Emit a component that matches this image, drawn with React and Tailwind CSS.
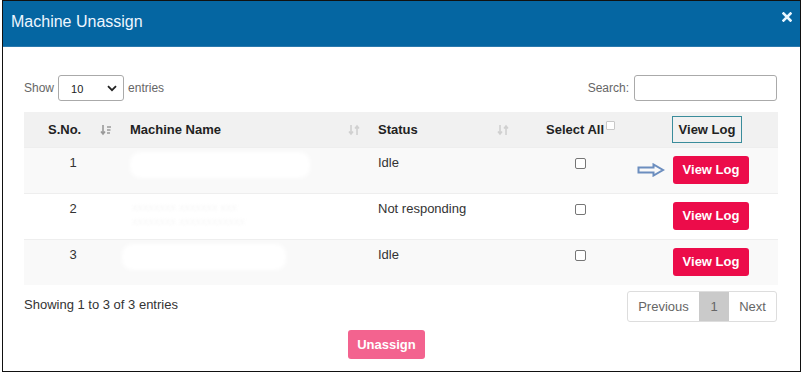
import React from "react";

const font = { fontFamily: '"Liberation Sans", Arial, sans-serif' };

const SortIcon = ({ active }) => (
  <svg width="12" height="12" viewBox="0 0 12 12" className="shrink-0">
    <g stroke={active ? "#9a9a9a" : "#d0d0d0"} strokeWidth="1.6" fill="none">
      <path d="M3 1v9M1 7.5l2 2.5 2-2.5" />
      {active ? (
        <path d="M7 3h4M7 6h3.5M7 9h3" />
      ) : (
        <path d="M9 11V2M7 4.5l2-2.5 2 2.5" />
      )}
    </g>
  </svg>
);

const Check = () => (
  <span className="inline-block w-[11px] h-[11px] border border-[#767676] rounded-[2px] bg-white" />
);

const Arrow = () => (
  <svg width="28" height="14" viewBox="0 0 28 14">
    <path
      d="M1.5 4.5h15V1.5l9.5 5.5-9.5 5.5V9.5h-15z"
      fill="none"
      stroke="#6c8ebf"
      strokeWidth="2"
      strokeLinejoin="miter"
    />
  </svg>
);

const rows = [
  { n: 1, status: "Idle", arrow: true, bg: "bg-[#f9f9f9]", blob: "w-[180px] ml-[4px]" },
  { n: 2, status: "Not responding", bg: "bg-white", faint: true },
  { n: 3, status: "Idle", bg: "bg-[#f9f9f9]", blob: "w-[164px] ml-[-4px]" },
];

export default function App() {
  return (
    <div className="w-[802px] h-[373px] bg-white text-[#333]" style={font}>
      <div className="ml-[2px] w-[799px] h-[372px] border border-[#111] flex flex-col">
        {/* header */}
        <div className="h-[46px] bg-[#0566a2] border-b border-[#2b79ad] flex items-center justify-between pl-[8px] pr-[8px]">
          <span className="text-[16px] text-[#eef6ff] -mt-[4px]">Machine Unassign</span>
          <svg width="10" height="10" viewBox="0 0 10 10" className="-mt-[14px]">
            <path d="M1.5 1.5l7 7M8.5 1.5l-7 7" stroke="#e8f6ff" strokeWidth="2.6" strokeLinecap="square" />
          </svg>
        </div>

        <div className="px-[21px] pt-[28px] flex flex-col">
          {/* controls */}
          <div className="flex items-center justify-between h-[26px] text-[12px] text-[#666]">
            <div className="flex items-center gap-[4px]">
              <span>Show</span>
              <div className="w-[66px] h-[26px] border border-[#aaa] rounded-[3px] flex items-center justify-between pl-[12px] pr-[6px] text-[11px] text-[#222]">
                <span className="mt-[3px]">10</span>
                <svg width="10" height="7" viewBox="0 0 10 7">
                  <path d="M1 1.2l4 4 4-4" stroke="#222" strokeWidth="1.8" fill="none" />
                </svg>
              </div>
              <span>entries</span>
            </div>
            <div className="flex items-center gap-[5px] mr-[2px]">
              <span>Search:</span>
              <div className="w-[143px] h-[26px] border border-[#aaa] rounded-[3px] bg-white" />
            </div>
          </div>

          {/* table */}
          <div className="mt-[11px] w-[754px] text-[13px]">
            <div className="grid grid-cols-[94px_248px_150px_129px_133px] h-[35px] bg-[#f1f1f1] font-bold text-[#222] items-center">
              <div className="flex items-center justify-between pl-[24px] pr-[6px]">
                <span>S.No.</span>
                <SortIcon active />
              </div>
              <div className="flex items-center justify-between pl-[12px] pr-[6px]">
                <span>Machine Name</span>
                <SortIcon />
              </div>
              <div className="flex items-center justify-between pl-[12px] pr-[7px]">
                <span>Status</span>
                <SortIcon />
              </div>
              <div className="flex items-start pl-[30px]">
                <span>Select All</span>
                <span className="inline-block w-[9px] h-[9px] border border-[#c8c8c8] rounded-[1px] bg-white ml-[2px] mt-[1px]" />
              </div>
              <div className="pl-[27px]">
                <span className="inline-flex items-center justify-center w-[70px] h-[27px] border border-[#3a8c9b] pt-[1px]">
                  View Log
                </span>
              </div>
            </div>

            {rows.map((r) => (
              <div
                key={r.n}
                className={`grid grid-cols-[94px_248px_150px_129px_133px] h-[46px] border-t border-[#eeeeee] ${r.bg}`}
              >
                <div className="text-center pt-[5px] pl-[4px]">{r.n}</div>
                <div className="pl-[8px] pt-[4px] relative">
                  {r.blob && <div className={`h-[26px] bg-white rounded-[10px] blur-[2px] ${r.blob}`} />}
                  {r.faint && (
                    <div className="pl-[6px] pt-[2px] text-[11px] text-[#f7f7f7] blur-[1px] leading-[14px]">
                      <div>xxxxxxxx xxxxxxx xxx</div>
                      <div>xxxxxxxx xxxxxxxxxxxx</div>
                    </div>
                  )}
                </div>
                <div className="pl-[12px] pt-[5px]">{r.status}</div>
                <div className="flex justify-center pt-[10px]">
                  <Check />
                </div>
                <div className="flex items-start pt-[8px] pl-[28px] relative">
                  {r.arrow && (
                    <div className="absolute left-[-8px] top-[15px]">
                      <Arrow />
                    </div>
                  )}
                  <span className="inline-flex items-center justify-center w-[76px] h-[28px] bg-[#ec0c4a] rounded-[3px] text-white font-bold">
                    View Log
                  </span>
                </div>
              </div>
            ))}
          </div>

          {/* footer */}
          <div className="flex items-center justify-between mt-[6px] w-[754px]">
            <span className="text-[13px] text-[#333] -mt-[3px]">Showing 1 to 3 of 3 entries</span>
            <div className="flex h-[31px] border border-[#dddddd] rounded-[3px] text-[13px] text-[#666] mr-[1px]">
              <span className="w-[71px] flex items-center justify-center">Previous</span>
              <span className="w-[30px] flex items-center justify-center bg-[#cacaca] text-[#666]">1</span>
              <span className="w-[47px] flex items-center justify-center">Next</span>
            </div>
          </div>

          <div className="flex justify-center mt-[8px]">
            <span className="inline-flex items-center justify-center w-[77px] h-[29px] bg-[#f3638f] rounded-[3px] text-white font-bold text-[13px] ml-[-30px]">
              Unassign
            </span>
          </div>
        </div>
      </div>
    </div>
  );
}
